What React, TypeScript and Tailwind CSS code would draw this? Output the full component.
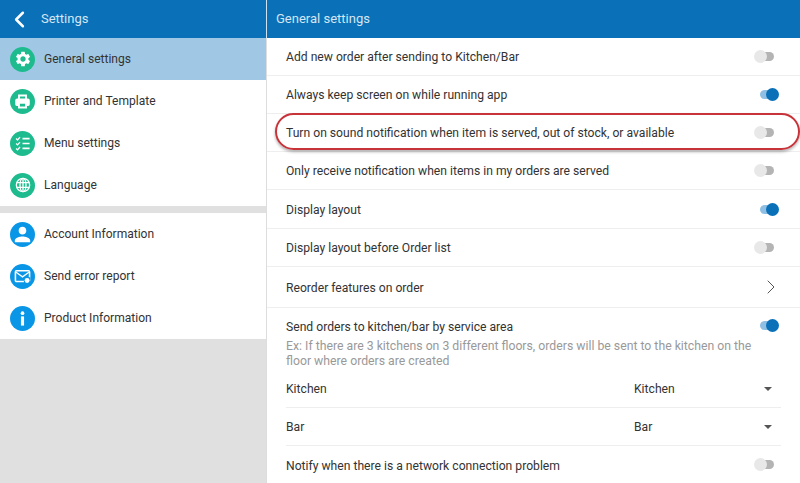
import { ChevronLeft, ChevronRight } from 'lucide-react';
import { MdPerson, MdSettings } from 'react-icons/md';
import type { ReactNode } from 'react';

function PrinterIcon() {
  return (
    <svg width="17" height="17" viewBox="0 0 24 24" fill="none" stroke="white" strokeWidth="2.6">
      <path d="M7 9V3.5h10V9" />
      <path d="M7 17H4a1 1 0 0 1-1-1v-5.5A1.5 1.5 0 0 1 4.5 9h15a1.5 1.5 0 0 1 1.5 1.5V16a1 1 0 0 1-1 1h-3" fill="white" />
      <path d="M7 14h10v6.5H7z" fill="#1dbb8e" />
    </svg>
  );
}

function ChecklistIcon() {
  return (
    <svg width="17" height="17" viewBox="0 0 24 24" fill="none" stroke="white" strokeWidth="2">
      <path d="M3 5l2 2 3.5-4M3 12l2 2 3.5-4M3 19l2 2 3.5-4" strokeWidth="1.8" />
      <path d="M12 5h10M12 12h10M12 19h10" strokeWidth="2.4" />
    </svg>
  );
}

function GlobeIcon() {
  return (
    <svg width="16" height="16" viewBox="0 0 24 24" fill="none" stroke="white" strokeWidth="2">
      <circle cx="12" cy="12" r="10" />
      <ellipse cx="12" cy="12" rx="4.5" ry="10" />
      <path d="M12 2v20M2.5 8.5h19M2.5 15.5h19" />
    </svg>
  );
}

function ReportIcon() {
  return (
    <svg width="17" height="17" viewBox="0 0 24 24" fill="none">
      <rect x="2" y="4" width="20" height="15" rx="1.5" stroke="white" strokeWidth="2.2" />
      <path d="M3 6l9 6.5L21 6" stroke="white" strokeWidth="1.8" />
      <path d="M14 13h9v9h-9z" fill="#0a96e6" />
      <circle cx="18.5" cy="17.5" r="3.5" fill="white" />
    </svg>
  );
}

function InfoIcon() {
  return (
    <svg width="17" height="17" viewBox="0 0 24 24" fill="white">
      <circle cx="12" cy="4.5" r="2.6" />
      <rect x="9.8" y="9" width="4.4" height="13" />
    </svg>
  );
}

function MenuItem({ icon, label, active, color }: { icon: ReactNode; label: string; active?: boolean; color: string }) {
  return (
    <div className={`flex h-[42px] items-center gap-[9px] pl-[10px] text-[12.05px] text-[#333] ${active ? 'bg-[#a0c8e4]' : 'bg-white'}`}>
      <span className={`flex h-[25px] w-[25px] shrink-0 items-center justify-center rounded-full text-white ${color}`}>
        {icon}
      </span>
      <span>{label}</span>
    </div>
  );
}

function Toggle({ on }: { on?: boolean }) {
  if (on) {
    return (
      <span className="relative block h-[13px] w-[19px]">
        <span className="absolute left-0 top-[2px] h-[9px] w-[14px] rounded-full bg-[#8fc0e4]" />
        <span className="absolute right-0 top-0 h-[13px] w-[13px] rounded-full bg-[#0a70b8]" />
      </span>
    );
  }
  return (
    <span className="relative mr-[5px] block h-[13px] w-[20px]">
      <span className="absolute right-0 top-[2px] h-[9px] w-[14px] rounded-full bg-[#b4b4b4]" />
      <span className="absolute left-0 top-0 h-[13px] w-[13px] rounded-full bg-[#e8e8e8]" />
    </span>
  );
}

function ToggleRow({ label, on, h = 'h-[38px]' }: { label: string; on?: boolean; h?: string }) {
  return (
    <div className={`flex items-center justify-between border-b border-[#eeeeee] pl-[19px] pr-[21px] text-[12.15px] text-[#333] ${h}`}>
      <span className="pt-[2px]">{label}</span>
      <Toggle on={on} />
    </div>
  );
}

function SelectRow({ label, value }: { label: string; value: string }) {
  return (
    <div className="mx-[19px] flex h-[38px] items-center border-b border-[#eeeeee] text-[12.15px] text-[#333]">
      <span className="w-[348px]">{label}</span>
      <span className="flex-1">{value}</span>
      <span className="mr-[9px] h-0 w-0 border-x-[4px] border-t-[4px] border-x-transparent border-t-[#555]" />
    </div>
  );
}

export default function App() {
  return (
    <div className="relative flex h-[483px] w-[800px] flex-col overflow-hidden bg-[#e0e0e0] font-[Roboto,sans-serif]">
      <header className="flex h-[38px] shrink-0 items-center bg-[#0a70b8] text-[13px] text-[#d5e6f4]">
        <div className="flex w-[266px] items-center pl-[6px]">
          <ChevronLeft size={27} strokeWidth={2.2} className="text-white" />
          <span className="ml-[8px]">Settings</span>
        </div>
        <div className="flex h-full items-center border-l border-[#cfe2f1] pl-[9px]">General settings</div>
      </header>

      <div className="flex min-h-0 flex-1">
        <aside className="w-[266px] shrink-0">
          <div>
            <MenuItem active color="bg-[#1dbb8e]" label="General settings" icon={<MdSettings size={18} />} />
            <MenuItem color="bg-[#1dbb8e]" label="Printer and Template" icon={<PrinterIcon />} />
            <MenuItem color="bg-[#1dbb8e]" label="Menu settings" icon={<ChecklistIcon />} />
            <MenuItem color="bg-[#1dbb8e]" label="Language" icon={<GlobeIcon />} />
          </div>
          <div className="mt-[7px]">
            <MenuItem color="bg-[#0a96e6]" label="Account Information" icon={<MdPerson size={23} />} />
            <MenuItem color="bg-[#0a96e6]" label="Send error report" icon={<ReportIcon />} />
            <MenuItem color="bg-[#0a96e6]" label="Product Information" icon={<InfoIcon />} />
          </div>
        </aside>

        <main className="flex-1 border-l border-[#dddddd] bg-white">
          <ToggleRow label="Add new order after sending to Kitchen/Bar" />
          <ToggleRow label="Always keep screen on while running app" on />
          <ToggleRow label="Turn on sound notification when item is served, out of stock, or available" />
          <ToggleRow label="Only receive notification when items in my orders are served" />
          <ToggleRow label="Display layout" on h="h-[39px]" />
          <ToggleRow label="Display layout before Order list" />
          <div className="flex h-[41px] items-center justify-between border-b border-[#eeeeee] pl-[19px] pr-[21px] text-[12.15px] text-[#333]">
            <span className="pt-[2px]">Reorder features on order</span>
            <ChevronRight size={24} strokeWidth={1} className="-mr-[4px] text-[#555]" />
          </div>
          <div className="pb-[1px] pl-[19px] pr-[21px] pt-[10px]">
            <div className="flex items-center justify-between text-[12.15px] text-[#333]">
              <span>Send orders to kitchen/bar by service area</span>
              <span className="mb-[4px]">
                <Toggle on />
              </span>
            </div>
            <p className="mt-[3px] w-[480px] text-[12.25px] leading-[15px] text-[#999]">
              Ex: If there are 3 kitchens on 3 different floors, orders will be sent to the kitchen on the floor where orders are created
            </p>
          </div>
          <SelectRow label="Kitchen" value="Kitchen" />
          <SelectRow label="Bar" value="Bar" />
          <ToggleRow label="Notify when there is a network connection problem" />
        </main>
      </div>

      <div className="absolute left-[275px] top-[113px] h-[37px] w-[525px] rounded-[19px] border-2 border-[#c8333a] shadow-[0_2px_3px_rgba(0,0,0,0.3)]" />
    </div>
  );
}
